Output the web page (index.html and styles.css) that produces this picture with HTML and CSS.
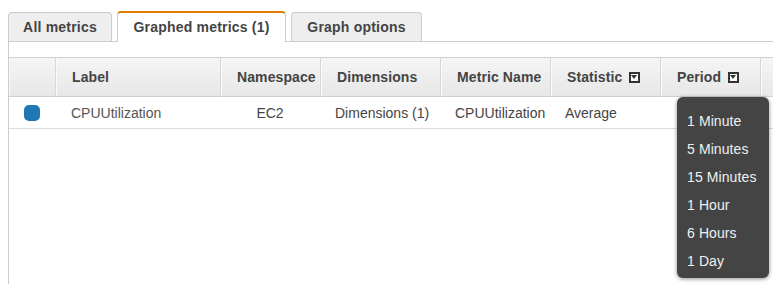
FILE: index.html
```html
<!DOCTYPE html>
<html lang="en">
<head>
  <meta charset="UTF-8">
  <meta name="viewport" content="width=device-width, initial-scale=1.0">
  <title>Graphed metrics</title>
  <link rel="stylesheet" href="styles.css">
</head>
<body>
  <div class="wrap">
    <div class="tabs">
      <div class="tab tab-all">All metrics</div>
      <div class="tab tab-graphed active">Graphed metrics (1)</div>
      <div class="tab tab-options">Graph options</div>
    </div>

    <div class="panel">
      <div class="table">
        <div class="hcell"></div>
        <div class="hcell">Label</div>
        <div class="hcell">Namespace</div>
        <div class="hcell">Dimensions</div>
        <div class="hcell">Metric Name</div>
        <div class="hcell">Statistic <span class="caret"></span></div>
        <div class="hcell period">Period <span class="caret"></span>
          <ul class="menu">
            <li>1 Minute</li>
            <li>5 Minutes</li>
            <li>15 Minutes</li>
            <li>1 Hour</li>
            <li>6 Hours</li>
            <li>1 Day</li>
          </ul>
        </div>
        <div class="hcell"></div>

        <div class="cell"><span class="swatch"></span></div>
        <div class="cell">CPUUtilization</div>
        <div class="cell center">EC2</div>
        <div class="cell dark">Dimensions (1)</div>
        <div class="cell dark">CPUUtilization</div>
        <div class="cell dark">Average</div>
        <div class="cell"></div>
        <div class="cell"></div>
      </div>
    </div>
  </div>
</body>
</html>
```

FILE: styles.css
```css
body {
  margin: 0;
  font-family: "Liberation Sans", Arial, sans-serif;
  background: #fff;
  color: #444;
}
.wrap {
  margin-left: 8px;
}
.tabs {
  display: flex;
  align-items: flex-end;
  gap: 5px;
  padding-top: 11px;
  border-bottom: 1px solid #ccc;
}
.tab {
  box-sizing: border-box;
  height: 29px;
  line-height: 28px;
  text-align: center;
  font-size: 14px;
  font-weight: bold;
  letter-spacing: 0.2px;
  color: #444;
  background: #eee;
  border: 1px solid #ccc;
  border-bottom: none;
  border-radius: 4px 4px 0 0;
}
.tab-all {
  width: 104px;
}
.tab-graphed {
  width: 169px;
}
.tab-options {
  width: 131px;
}
.tab.active {
  height: 31px;
  line-height: 29px;
  background: #fff;
  border-top: 2px solid #e07b00;
  margin-bottom: -1px;
}
.panel {
  border-left: 1px solid #ccc;
  padding-top: 15px;
  height: 227px;
}
.table {
  display: grid;
  grid-template-columns: 46px 165px 100px 120px 110px 110px 100px 1fr;
}
.hcell {
  position: relative;
  height: 38px;
  line-height: 38px;
  padding-left: 16px;
  font-size: 14px;
  font-weight: bold;
  letter-spacing: 0.1px;
  color: #444;
  background: linear-gradient(#f5f5f5, #e7e7e7);
  border-top: 1px solid #d0d0d0;
  border-bottom: 1px solid #d0d0d0;
  border-left: 1px solid #d8d8d8;
  box-shadow: inset 1px 0 #fafafa;
  white-space: nowrap;
}
.hcell:first-child {
  border-left: none;
}
.caret {
  display: inline-block;
  position: relative;
  width: 7px;
  height: 7px;
  margin-left: 3px;
  vertical-align: -1px;
  border: 2px solid #333;
  background: #fff;
}
.caret::after {
  content: "";
  position: absolute;
  left: 0;
  top: 1px;
  border-left: 3.5px solid transparent;
  border-right: 3.5px solid transparent;
  border-top: 4px solid #333;
}
.cell {
  height: 31px;
  line-height: 33px;
  padding-left: 16px;
  font-size: 14px;
  color: #555;
  border-bottom: 1px solid #ddd;
  white-space: nowrap;
}
.cell.dark {
  padding-left: 15px;
  color: #444;
}
.cell.center {
  padding-left: 0;
  text-align: center;
  color: #444;
}
.swatch {
  display: inline-block;
  width: 16px;
  height: 16px;
  border-radius: 5px;
  background: #1f77b4;
  vertical-align: -3px;
  margin-left: -1px;
}
.menu {
  position: absolute;
  top: 39px;
  left: 16px;
  width: 92px;
  margin: 0;
  padding: 10px 0 3px;
  list-style: none;
  background: #444;
  border-radius: 6px;
  box-shadow: 0 1px 4px rgba(0,0,0,0.45);
  z-index: 2;
}
.menu li {
  padding-left: 10px;
  line-height: 28px;
  font-size: 14px;
  font-weight: normal;
  color: #f0f0f0;
}
```
